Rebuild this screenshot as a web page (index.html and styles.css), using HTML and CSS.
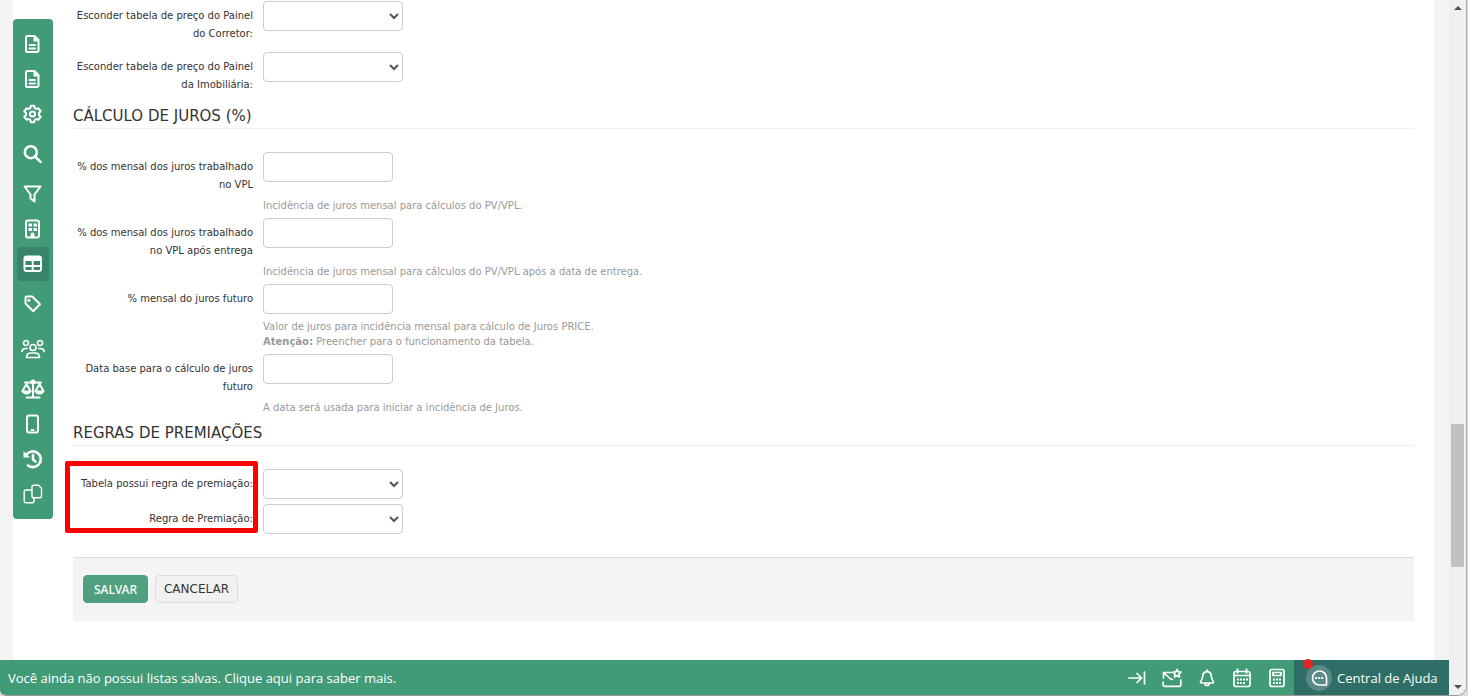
FILE: index.html
```html
<!DOCTYPE html>
<html lang="pt-BR">
<head>
    <meta charset="UTF-8">
    <meta name="viewport" content="width=device-width, initial-scale=1.0">
    <title>Tabela de preço</title>
    <link rel="stylesheet" href="styles.css">
</head>
<body>
    <div class="window">
        <div class="page">
            <div class="panel">
                <nav class="sidebar" aria-label="Menu">
                    <div class="nav-group">
                        <a href="#" aria-label="Documentos">
                            <svg class="icon" viewBox="0 0 20 20"><path d="M4.500 2h7l4 4v10.500a1.500 1.500 0 0 1-1.500 1.500H4.500A1.500 1.500 0 0 1 3 16.500v-13A1.500 1.500 0 0 1 4.500 2z"/><path class="fill" d="M10.500 2l5.500 5.500h-5.500z"/><path d="M6.500 11h5.500M6.500 14.500h5.500"/></svg>
                        </a>
                        <a href="#" aria-label="Propostas">
                            <svg class="icon" viewBox="0 0 20 20"><path d="M4.500 2h7l4 4v10.500a1.500 1.500 0 0 1-1.500 1.500H4.500A1.500 1.500 0 0 1 3 16.500v-13A1.500 1.500 0 0 1 4.500 2z"/><path class="fill" d="M10.500 2l5.500 5.500h-5.500z"/><path d="M6.500 11h5.500M6.500 14.500h5.500"/></svg>
                        </a>
                        <a href="#" aria-label="Configurações">
                            <svg class="icon" viewBox="0 0 20 20"><path d="M7.800 1.800h3.400l.5 2.300 1.600.9 2.200-.7 2.200 2.900-1.700 1.800v2l1.700 1.800-2.200 2.900-2.200-.7-1.600.9-.5 2.300H7.800l-.5-2.300-1.600-.9-2.200.7-2.200-2.900L3 11V9L1.300 7.200l2.200-2.900 2.200.7 1.600-.9z"/><circle cx="9.500" cy="10" r="2.600"/></svg>
                        </a>
                    </div>
                    <div class="nav-group">
                        <a href="#" aria-label="Buscar">
                            <svg class="icon heavy" viewBox="0 0 20 20"><circle cx="7.800" cy="8.200" r="6"/><path d="M12.500 12.900l5 5"/></svg>
                        </a>
                    </div>
                    <div class="nav-group">
                        <a href="#" aria-label="Filtrar">
                            <svg class="icon" viewBox="0 0 20 20"><path d="M1.500 2.500h16l-6 8v7l-4-3v-4z"/></svg>
                        </a>
                        <a href="#" aria-label="Empreendimentos">
                            <svg class="icon" viewBox="0 0 20 20"><rect x="3" y="1.500" width="13" height="17" rx="2"/><path class="fill" d="M5.500 4.500h3.500v3H5.500zM10.500 4.500H14v3h-3.500zM5.500 9h3.500v3H5.500zM10.500 9H14v3h-3.500zM7.500 18v-2.500a2 2 0 0 1 4 0V18z"/></svg>
                        </a>
                        <a href="#" class="active" aria-label="Tabelas" aria-current="page">
                            <svg class="icon" viewBox="0 0 20 20"><rect x="1.500" y="2.500" width="16.500" height="14.500" rx="2"/><path class="fill" d="M1.500 2.500h16v4.500h-16z"/><path d="M2 12h15.500M9.700 6v11"/></svg>
                        </a>
                    </div>
                    <div class="nav-group">
                        <a href="#" aria-label="Etiquetas">
                            <svg class="icon" viewBox="0 0 20 20"><path d="M2.500 3.500a1 1 0 0 1 1-1h5.700L17 10.300l-6.800 6.900-7.700-7.700z"/><circle class="fill" cx="5.900" cy="6.200" r="1.500"/></svg>
                        </a>
                    </div>
                    <div class="nav-group spaced">
                        <a href="#" aria-label="Equipes">
                            <svg class="icon wide" viewBox="0 0 24 20"><circle cx="5" cy="4" r="2.500"/><circle cx="19" cy="4" r="2.500"/><circle cx="12" cy="8.500" r="3"/><path d="M5.500 18.500c0-3 2-4.500 4.500-4.500h4c2.500 0 4.500 1.500 4.500 4.500zM1 12.500C1 10.500 2.500 9.500 4.500 9.500H6M23 12.500c0-2-1.500-3-3.500-3H18"/></svg>
                        </a>
                    </div>
                    <div class="nav-group">
                        <a href="#" aria-label="Jurídico">
                            <svg class="icon wide scales" viewBox="0 0 24 20"><path d="M4 3.500h16M12 3v15M5.500 18.500h13M1.500 12L5.500 5l4 7M14.500 12l4-7 4 7"/><circle class="fill" cx="12" cy="3" r="2.500"/><path class="fill" d="M.5 11.500h10a5 4 0 0 1-10 0zM13.500 11.500h10a5 4 0 0 1-10 0z"/></svg>
                        </a>
                        <a href="#" aria-label="Aplicativo">
                            <svg class="icon" viewBox="0 0 20 20"><rect x="4" y="1.500" width="11" height="17" rx="2"/><path d="M8.500 16h2"/></svg>
                        </a>
                        <a href="#" aria-label="Histórico">
                            <svg class="icon heavy" viewBox="0 0 20 20"><path d="M3.500 5.500A7.900 7.900 0 1 1 5 16.500M10 6v4.500l2.500 2"/><path class="fill" d="M.5 2v6.500H7z"/></svg>
                        </a>
                        <a href="#" aria-label="Copiar">
                            <svg class="icon thin" viewBox="0 0 20 20"><path d="M10.500 1.200h5l3 3v8a1.500 1.500 0 0 1-1.500 1.500h-6.500A1.500 1.500 0 0 1 9 12.200V2.700a1.500 1.500 0 0 1 1.500-1.500zM8.500 6H2.700a1.500 1.500 0 0 0-1.500 1.500v9.700a1.500 1.500 0 0 0 1.500 1.500h6.800a1.500 1.500 0 0 0 1.500-1.500V14"/></svg>
                        </a>
                    </div>
                </nav>

                <form class="content">
                    <div class="form-row no-help">
                        <label for="hide_broker">Esconder tabela de preço do Painel do Corretor:</label>
                        <select id="hide_broker"><option></option><option>Sim</option><option>Não</option></select>
                    </div>
                    <div class="form-row no-help">
                        <label for="hide_agency">Esconder tabela de preço do Painel da Imobiliária:</label>
                        <select id="hide_agency"><option></option><option>Sim</option><option>Não</option></select>
                    </div>

                    <h2>CÁLCULO DE JUROS (%)</h2>
                    <div class="form-row">
                        <label for="vpl">% dos mensal dos juros trabalhado no VPL</label>
                        <input type="text" id="vpl">
                        <p class="help">Incidência de juros mensal para cálculos do PV/VPL.</p>
                    </div>
                    <div class="form-row">
                        <label for="vpl_after">% dos mensal dos juros trabalhado no VPL após entrega</label>
                        <input type="text" id="vpl_after">
                        <p class="help">Incidência de juros mensal para cálculos do PV/VPL após a data de entrega.</p>
                    </div>
                    <div class="form-row">
                        <label for="future">% mensal do juros futuro</label>
                        <input type="text" id="future">
                        <p class="help">Valor de juros para incidência mensal para cálculo de Juros PRICE.<br><b>Atenção:</b> Preencher para o funcionamento da tabela.</p>
                    </div>
                    <div class="form-row">
                        <label for="base_date">Data base para o cálculo de juros futuro</label>
                        <input type="text" id="base_date">
                        <p class="help">A data será usada para iniciar a incidência de Juros.</p>
                    </div>

                    <h2>REGRAS DE PREMIAÇÕES</h2>
                    <div class="highlighted">
                        <div class="form-row">
                            <label for="has_rule">Tabela possui regra de premiação:</label>
                            <select id="has_rule"><option></option><option>Sim</option><option>Não</option></select>
                        </div>
                        <div class="form-row">
                            <label for="rule">Regra de Premiação:</label>
                            <select id="rule"><option></option></select>
                        </div>
                        <div class="highlight"></div>
                    </div>

                    <div class="actions">
                        <button type="submit" class="save">SALVAR</button>
                        <button type="button" class="cancel">CANCELAR</button>
                    </div>
                </form>
            </div>

            <footer class="bottom-bar">
                <a href="#" class="message">Você ainda não possui listas salvas. Clique aqui para saber mais.</a>
                <div class="tools">
                    <button type="button" aria-label="Recolher">
                        <svg class="icon tool" viewBox="0 0 20 20"><path d="M2 10h12M10 5.500l4.500 4.500-4.500 4.500M17.500 4v12"/></svg>
                    </button>
                    <button type="button" aria-label="Mensagens">
                        <svg class="icon tool" viewBox="0 0 20 20"><path d="M9.500 4.500H1.500V10M1.500 4.500L8.500 11l2 .5M1.200 14v2.500A1.800 1.800 0 0 0 3 18.300h14a1.800 1.800 0 0 0 1.800-1.800V12"/><path d="M15 1.500l1.200 2.300 2.800.4-2 2 .5 2.800-2.500-1.300-2.500 1.300.5-2.800-2-2 2.800-.4z"/></svg>
                    </button>
                    <button type="button" aria-label="Notificações">
                        <svg class="icon tool" viewBox="0 0 20 20"><path d="M4 13c1.500-1.500 1.500-3 1.700-5 .3-2.500 2-4.300 4.300-4.300s4 1.800 4.300 4.300c.2 2 .2 3.500 1.700 5 1 1.200.5 2-.5 2h-11c-1 0-1.500-.8-.5-2zM10 2v1.700M8 15.500a2 2 0 0 0 4 0"/></svg>
                    </button>
                    <button type="button" aria-label="Agenda">
                        <svg class="icon tool" viewBox="0 0 20 20"><rect x="2" y="3.500" width="16" height="15" rx="2"/><path d="M2 7.500h16M5.500 1v4M14.500 1v4"/><path class="dots" d="M5 11.500h11M5 15h8"/></svg>
                    </button>
                    <button type="button" aria-label="Calculadora">
                        <svg class="icon tool" viewBox="0 0 20 20"><rect x="3" y="1.500" width="14" height="17" rx="2"/><rect x="6" y="4.500" width="8" height="3"/><path class="dots" d="M6 11.500h8M6 15h8"/></svg>
                    </button>
                </div>
                <button type="button" class="help-center">
                    <span class="chat">
                        <svg class="icon tool" viewBox="0 0 20 20"><path d="M17.500 17h-7.500a7 7 0 1 1 7.500-7z"/><path class="chat-dots" d="M6 10h8"/></svg>
                        <span class="badge"></span>
                    </span>
                    Central de Ajuda
                </button>
            </footer>
        </div>

        <div class="scrollbar">
            <div class="arrow up"></div>
            <div class="before"></div>
            <div class="thumb"></div>
            <div class="after"></div>
            <div class="arrow down"></div>
        </div>
    </div>
</body>
</html>
```
FILE: styles.css
```css
* {
    box-sizing: border-box;
}
body {
    margin: 0;
    background-color: #ddd;
    color: #333;
    font-family: Verdana, "DejaVu Sans", sans-serif;
    font-size: 10px;
}
.window {
    display: grid;
    grid-template-columns: 1fr 17px;
    min-height: 100vh;
    margin-right: 1px;
    border-right: 1px solid #aaa;
    border-bottom: 1px solid #999;
    border-radius: 0 0 10px 6px;
    background-color: #f3f3f3;
    overflow: hidden;
}
.page {
    display: flex;
    flex-direction: column;
}
.panel {
    flex: 1;
    display: flex;
    align-items: flex-start;
    gap: 20px;
    margin: 0 15px 0 13px;
    padding-right: 20px;
    background-color: #fff;
}

/* sidebar */
.sidebar {
    width: 40px;
    margin-top: 19px;
    padding: 8px 4px;
    border-radius: 4px;
    background-color: #429b77;
    display: flex;
    flex-direction: column;
    gap: 6px;
}
.nav-group {
    display: flex;
    flex-direction: column;
    gap: 1px;
}
.nav-group.spaced {
    margin-top: 5px;
}
.sidebar a {
    display: flex;
    align-items: center;
    justify-content: center;
    height: 34px;
    border-radius: 4px;
}
.sidebar a.active {
    background-color: #38846a;
}
.icon {
    display: block;
    width: 20px;
    height: 20px;
    flex: none;
    fill: none;
    stroke: #fff;
    stroke-width: 2;
    stroke-linejoin: round;
    stroke-linecap: round;
}
.icon.wide {
    width: 24px;
    stroke-width: 1.7;
}
.icon.scales {
    stroke-width: 2;
}
.icon.heavy {
    stroke-width: 2.6;
}
.icon.thin {
    stroke-width: 1.4;
}
.icon.tool {
    stroke-width: 1.7;
}
.icon .fill {
    fill: #fff;
    stroke: none;
}
.icon .dots {
    stroke-width: 2;
    stroke-linecap: butt;
    stroke-dasharray: 2 1;
}
.icon .chat-dots {
    stroke-width: 2;
    stroke-linecap: butt;
    stroke-dasharray: 2 1;
}

/* form */
.content {
    flex: 1;
    min-width: 0;
    padding-top: 1px;
}
h2 {
    margin: 0 0 23px;
    padding-top: 2px;
    border-bottom: 1px solid #eee;
    font-size: 15px;
    font-weight: normal;
    line-height: 23px;
}
.form-row {
    display: grid;
    grid-template-columns: 180px 1fr;
    column-gap: 10px;
    row-gap: 5px;
    align-items: start;
    justify-items: start;
    margin-bottom: 5px;
}
.form-row.no-help {
    margin-bottom: 10px;
}
.form-row label {
    justify-self: end;
    margin-bottom: -1px;
    padding-top: 6px;
    line-height: 18px;
    text-align: right;
}
.form-row input,
.form-row select {
    width: 130px;
    height: 30px;
    padding: 4px 6px;
    border: 1px solid #ccc;
    border-radius: 4px;
    background-color: #fff;
    color: #555;
    font-family: inherit;
    font-size: 13px;
}
.form-row select {
    width: 140px;
    padding: 4px 1px;
}
.help {
    grid-column: 2;
    margin: 0;
    color: #999;
    line-height: 15px;
}
.highlighted {
    position: relative;
}
.highlight {
    position: absolute;
    top: -8px;
    left: -8px;
    width: 193px;
    height: 72px;
    border: 5px solid #f00;
    border-radius: 2px;
    pointer-events: none;
}
.actions {
    display: flex;
    gap: 7px;
    margin-top: 23px;
    padding: 17px 10px 18px;
    border-top: 1px solid #ddd;
    background-color: #f4f4f4;
}
.actions button {
    height: 28px;
    padding: 0 8px;
    border: 1px solid #ddd;
    border-radius: 4px;
    background-color: #f1f1f1;
    color: #333;
    font-family: inherit;
    font-size: 12px;
}
.actions .save {
    padding: 0 10px;
    border-color: #4ea07e;
    background-color: #4ea07e;
    color: #fff;
    font-family: "Noto Sans", sans-serif;
    font-weight: 500;
}

/* bottom bar */
.bottom-bar {
    display: flex;
    align-items: center;
    height: 35px;
    background-color: #429b77;
    color: #fff;
    font-family: "Open Sans", "Noto Sans", sans-serif;
    font-size: 13px;
    font-weight: 500;
}
.message {
    flex: 1;
    padding-left: 8px;
    color: inherit;
    text-decoration: none;
}
.tools {
    display: flex;
    gap: 15px;
    padding-right: 7px;
}
.tools button {
    padding: 0;
    border: 0;
    background: none;
}
.help-center {
    display: flex;
    align-items: center;
    gap: 5px;
    width: 155px;
    height: 100%;
    padding: 0 0 0 12px;
    border: 0;
    background-color: #2e6e66;
    color: inherit;
    font: inherit;
    white-space: nowrap;
}
.chat {
    position: relative;
    display: flex;
    align-items: center;
    justify-content: center;
    width: 26px;
    height: 26px;
    border-radius: 50%;
    background-color: #588b85;
}
.badge {
    position: absolute;
    top: -6px;
    left: -3px;
    width: 10px;
    height: 10px;
    border-radius: 50%;
    background-color: #e52525;
}

/* scrollbar */
.scrollbar {
    display: flex;
    flex-direction: column;
    align-items: center;
    padding: 6px 2px;
    background-color: #f0f0f0;
}
.arrow {
    border: 4px solid transparent;
}
.arrow.up {
    border-top: 0;
    border-bottom-color: #505050;
}
.arrow.down {
    border-bottom: 0;
    border-top-color: #505050;
}
.before {
    flex: 414;
}
.thumb {
    flex: 143;
    width: 100%;
    background-color: #c1c1c1;
}
.after {
    flex: 118;
}
```
